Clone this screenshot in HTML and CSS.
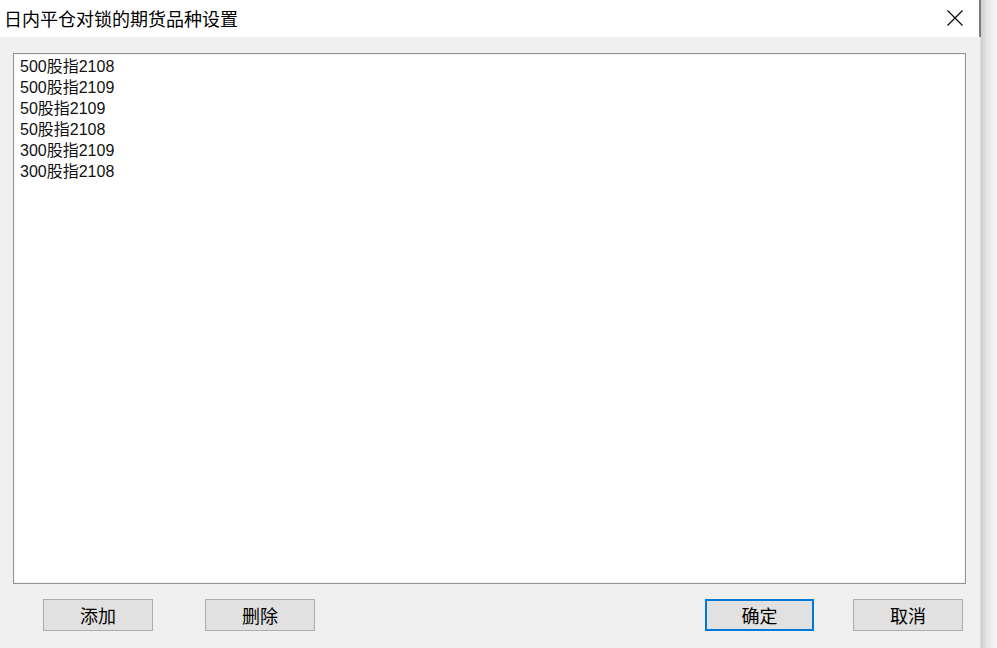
FILE: index.html
```html
<!DOCTYPE html>
<html lang="zh-CN">
<head>
<meta charset="utf-8">
<title>日内平仓对锁的期货品种设置</title>
<link rel="stylesheet" href="styles.css">
</head>
<body>
<div class="screen">
  <div class="window">
    <div class="titlebar">
      <span class="title">日内平仓对锁的期货品种设置</span>
      <span class="close" aria-label="关闭">
        <svg width="16" height="16" viewBox="0 0 16 16"><path d="M0.5 0.5 L15.5 15.5 M15.5 0.5 L0.5 15.5" stroke="#000" stroke-width="1.1" fill="none"/></svg>
      </span>
    </div>
    <div class="body">
      <div class="listbox">
        <div class="item">500股指2108</div>
        <div class="item">500股指2109</div>
        <div class="item">50股指2109</div>
        <div class="item">50股指2108</div>
        <div class="item">300股指2109</div>
        <div class="item">300股指2108</div>
      </div>
      <div class="buttons">
        <button class="btn btn-add">添加</button>
        <button class="btn btn-del">删除</button>
        <button class="btn btn-ok default">确定</button>
        <button class="btn btn-cancel">取消</button>
      </div>
    </div>
  </div>
  <div class="shadow"></div>
</div>
</body>
</html>
```

FILE: styles.css
```css
html, body {
  margin: 0;
  padding: 0;
  width: 997px;
  height: 648px;
  overflow: hidden;
  background: #f7f7f7;
  font-family: "Noto Sans CJK SC", "Noto Sans", sans-serif;
  color: #000;
}

.screen {
  display: flex;
  height: 648px;
}

.window {
  width: 980px;
  height: 648px;
  display: flex;
  flex-direction: column;
  background: #f0f0f0;
  border-right: 1px solid #dcdcdc;
}

.titlebar {
  height: 37px;
  background: #fff;
  display: flex;
  align-items: center;
  justify-content: space-between;
  padding: 0 17px 0 4px;
  box-sizing: border-box;
  position: relative;
}

.titlebar::after {
  content: "";
  position: absolute;
  right: -1px;
  top: 0;
  bottom: 0;
  width: 2px;
  background: #7a7a7a;
}

.title {
  font-size: 18px;
  line-height: 24px;
  margin-top: -2px;
}

.close {
  display: flex;
  width: 16px;
  height: 16px;
  margin-top: -1px;
}

.body {
  flex: 1;
  padding: 16px 0 0 13px;
}

.listbox {
  width: 953px;
  height: 531px;
  box-sizing: border-box;
  background: #fff;
  border: 1px solid #8f939a;
  box-shadow: inset 0 0 0 1px #f4f4f4;
  padding: 2px 0 0 6px;
}

.item {
  font-family: "Liberation Sans", "Noto Sans CJK SC", sans-serif;
  font-size: 16px;
  line-height: 21px;
  color: #111;
}

.buttons {
  display: flex;
  margin-top: 15px;
  padding-left: 30px;
}

.btn {
  width: 110px;
  height: 32px;
  box-sizing: border-box;
  background: #e1e1e1;
  border: 1px solid #adadad;
  font-family: "Noto Sans CJK SC", "Noto Sans", sans-serif;
  font-size: 18px;
  color: #000;
  padding: 0;
  line-height: 28px;
}

.btn-del {
  margin-left: 52px;
}

.btn-ok {
  margin-left: 390px;
  width: 109px;
}

.btn-cancel {
  margin-left: 39px;
}

.default {
  border: 2px solid #0078d7;
}

.shadow {
  width: 16px;
  height: 648px;
  background: linear-gradient(to right, #cfcfcf, #e6e6e6 40%, #f6f6f6);
}
```
